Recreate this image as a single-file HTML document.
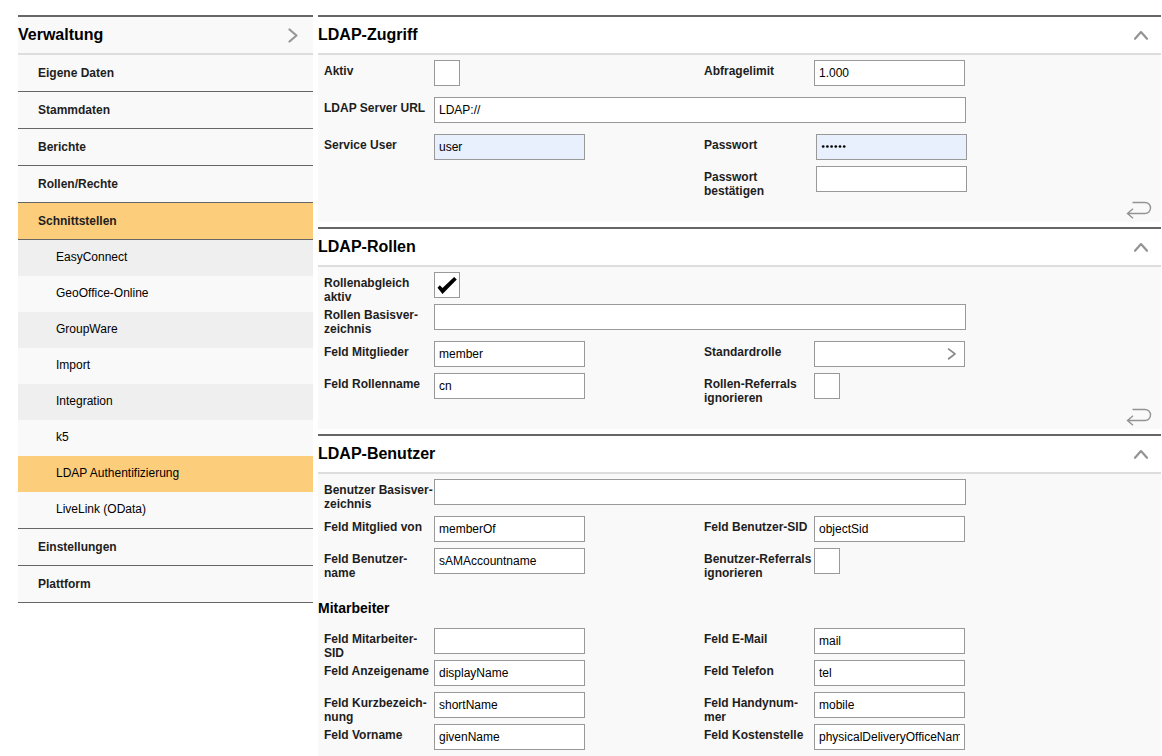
<!DOCTYPE html><html><head><meta charset="utf-8"><style>
*{box-sizing:border-box;margin:0;padding:0}
html,body{width:1162px;height:756px;overflow:hidden;background:#fff}
body{position:relative;font-family:"Liberation Sans",sans-serif;color:#000;font-size:12px}
.a{position:absolute}
.nav{position:absolute;left:18px;width:295px}
.nh{position:absolute;left:18px;top:15px;width:295px;height:40px;border-top:2px solid #666;border-bottom:2px solid #ddd;background:#f9f9f9}
.nh span{position:absolute;left:0;top:0;line-height:36px;font-size:16px;font-weight:bold}
.ni{position:absolute;left:18px;width:295px;height:37px;border-bottom:1px solid #666;background:#f9f9f9}
.ni span{position:absolute;left:20px;top:0;line-height:36px;font-weight:bold;color:#1e1e1e}
.ns{position:absolute;left:18px;width:295px;height:36px;background:#f9f9f9}
.ns span{position:absolute;left:38px;top:-1px;line-height:36px}
.alt{background:#efefef}
.act{background:#fccd7b}
.sec{position:absolute;left:318px;width:843px;border-top:2px solid #666}
.sh{height:38px;background:#fff;border-bottom:2px solid #ddd;position:relative}
.sh span{position:absolute;left:0;top:0;line-height:36px;font-size:16px;font-weight:bold}
.sb{background:#f9f9f9;position:relative}
.lb{position:absolute;font-weight:bold;line-height:14px;white-space:nowrap;color:#1e1e1e}
.in{position:absolute;width:151px;height:26px;border:1px solid #999;background:#fff;padding-left:4px;line-height:24px;white-space:nowrap;overflow:hidden}
.w{width:532px}
.cb{position:absolute;width:26px;height:26px;border:1px solid #999;background:#fff}
.af{background:#e8f0fe}
</style></head><body>
<div class="nh"><span>Verwaltung</span><svg class="a" style="left:268px;top:9px" width="14" height="20" viewBox="0 0 14 20"><path d="M3.5 3.5 L10.5 9.5 L3.5 15.5" fill="none" stroke="#999" stroke-width="2.3" stroke-linecap="round" stroke-linejoin="round"/></svg></div>
<div class="ni" style="top:55px"><span>Eigene Daten</span></div>
<div class="ni" style="top:92px"><span>Stammdaten</span></div>
<div class="ni" style="top:129px"><span>Berichte</span></div>
<div class="ni" style="top:166px"><span>Rollen/Rechte</span></div>
<div class="ni act" style="top:203px"><span>Schnittstellen</span></div>
<div class="ns alt" style="top:240px"><span>EasyConnect</span></div>
<div class="ns" style="top:276px"><span>GeoOffice-Online</span></div>
<div class="ns alt" style="top:312px"><span>GroupWare</span></div>
<div class="ns" style="top:348px"><span>Import</span></div>
<div class="ns alt" style="top:384px"><span>Integration</span></div>
<div class="ns" style="top:420px"><span>k5</span></div>
<div class="ns act" style="top:456px"><span>LDAP Authentifizierung</span></div>
<div class="ns" style="top:492px"><span>LiveLink (OData)</span></div>
<div class="a" style="left:18px;top:528px;width:295px;height:1px;background:#666"></div>
<div class="ni" style="top:529px"><span>Einstellungen</span></div>
<div class="ni" style="top:566px"><span>Plattform</span></div>
<div class="sec" style="top:15px"><div class="sh"><span>LDAP-Zugriff</span><svg class="a" style="left:813px;top:12px" width="20" height="12" viewBox="0 0 20 12"><path d="M4 9.8 L10 3.1 L16 9.8" fill="none" stroke="#939393" stroke-width="2.2" stroke-linecap="round" stroke-linejoin="round"/></svg></div><div class="sb" style="height:167px"><svg class="a" style="left:806px;top:145px" width="28" height="20" viewBox="0 0 28 20"><path d="M8.5 2.5 H21 A5.5 5.5 0 0 1 21 13.5 H3.5 M9 8.8 L3.5 13.5 L9 18.2" fill="none" stroke="#939393" stroke-width="1.4"/></svg></div></div>
<div class="sec" style="top:227px"><div class="sh"><span>LDAP-Rollen</span><svg class="a" style="left:813px;top:12px" width="20" height="12" viewBox="0 0 20 12"><path d="M4 9.8 L10 3.1 L16 9.8" fill="none" stroke="#939393" stroke-width="2.2" stroke-linecap="round" stroke-linejoin="round"/></svg></div><div class="sb" style="height:162px"><svg class="a" style="left:806px;top:140px" width="28" height="20" viewBox="0 0 28 20"><path d="M8.5 2.5 H21 A5.5 5.5 0 0 1 21 13.5 H3.5 M9 8.8 L3.5 13.5 L9 18.2" fill="none" stroke="#939393" stroke-width="1.4"/></svg></div></div>
<div class="sec" style="top:434px"><div class="sh"><span>LDAP-Benutzer</span><svg class="a" style="left:813px;top:12px" width="20" height="12" viewBox="0 0 20 12"><path d="M4 9.8 L10 3.1 L16 9.8" fill="none" stroke="#939393" stroke-width="2.2" stroke-linecap="round" stroke-linejoin="round"/></svg></div><div class="sb" style="height:322px"><svg class="a" style="left:806px;top:300px" width="28" height="20" viewBox="0 0 28 20"><path d="M8.5 2.5 H21 A5.5 5.5 0 0 1 21 13.5 H3.5 M9 8.8 L3.5 13.5 L9 18.2" fill="none" stroke="#939393" stroke-width="1.4"/></svg></div></div>
<div class="lb" style="left:324px;top:64px">Aktiv</div>
<div class="cb" style="left:434px;top:60px"></div>
<div class="lb" style="left:704px;top:64px">Abfragelimit</div>
<div class="in" style="left:814px;top:60px">1.000</div>
<div class="lb" style="left:324px;top:101px">LDAP Server URL</div>
<div class="in w" style="left:434px;top:97px">LDAP://</div>
<div class="lb" style="left:324px;top:138px">Service User</div>
<div class="in af" style="left:434px;top:134px">user</div>
<div class="lb" style="left:704px;top:138px">Passwort</div>
<div class="in af" style="left:816px;top:134px"><svg class="a" style="left:0;top:0" width="40" height="24"><circle cx="6.2" cy="11.5" r="1.35" fill="#000"/><circle cx="10.4" cy="11.5" r="1.35" fill="#000"/><circle cx="14.6" cy="11.5" r="1.35" fill="#000"/><circle cx="18.8" cy="11.5" r="1.35" fill="#000"/><circle cx="23.0" cy="11.5" r="1.35" fill="#000"/><circle cx="27.2" cy="11.5" r="1.35" fill="#000"/></svg></div>
<div class="lb" style="left:704px;top:170px">Passwort<br>bestätigen</div>
<div class="in" style="left:816px;top:166px"></div>
<div class="lb" style="left:324px;top:276px">Rollenabgleich<br>aktiv</div>
<div class="cb" style="left:434px;top:272px"><svg class="a" style="left:-1px;top:-1px" width="26" height="26" viewBox="0 0 26 26"><polygon points="3.5,15.8 5.8,13.3 8.5,16 20.1,5 22.8,7.5 8.5,21.9" fill="#000"/></svg></div>
<div class="lb" style="left:324px;top:308px">Rollen Basisver-<br>zeichnis</div>
<div class="in w" style="left:434px;top:304px"></div>
<div class="lb" style="left:324px;top:345px">Feld Mitglieder</div>
<div class="in" style="left:434px;top:341px">member</div>
<div class="lb" style="left:704px;top:345px">Standardrolle</div>
<div class="in" style="left:814px;top:341px"><svg class="a" style="left:131px;top:6px" width="12" height="14" viewBox="0 0 12 14"><path d="M2.7 1.1 L9 5.9 L2.7 10.7" fill="none" stroke="#888" stroke-width="1.8" stroke-linecap="round" stroke-linejoin="round"/></svg></div>
<div class="lb" style="left:324px;top:377px">Feld Rollenname</div>
<div class="in" style="left:434px;top:373px">cn</div>
<div class="lb" style="left:704px;top:377px">Rollen-Referrals<br>ignorieren</div>
<div class="cb" style="left:814px;top:373px"></div>
<div class="lb" style="left:324px;top:483px">Benutzer Basisver-<br>zeichnis</div>
<div class="in w" style="left:434px;top:479px"></div>
<div class="lb" style="left:324px;top:520px">Feld Mitglied von</div>
<div class="in" style="left:434px;top:516px">memberOf</div>
<div class="lb" style="left:704px;top:520px">Feld Benutzer-SID</div>
<div class="in" style="left:814px;top:516px">objectSid</div>
<div class="lb" style="left:324px;top:552px">Feld Benutzer-<br>name</div>
<div class="in" style="left:434px;top:548px">sAMAccountname</div>
<div class="lb" style="left:704px;top:552px">Benutzer-Referrals<br>ignorieren</div>
<div class="cb" style="left:814px;top:548px"></div>
<div class="a" style="left:318px;top:600px;font-size:14px;font-weight:bold;line-height:16px">Mitarbeiter</div>
<div class="lb" style="left:324px;top:632px">Feld Mitarbeiter-<br>SID</div>
<div class="in" style="left:434px;top:628px"></div>
<div class="lb" style="left:704px;top:632px">Feld E-Mail</div>
<div class="in" style="left:814px;top:628px">mail</div>
<div class="lb" style="left:324px;top:664px">Feld Anzeigename</div>
<div class="in" style="left:434px;top:660px">displayName</div>
<div class="lb" style="left:704px;top:664px">Feld Telefon</div>
<div class="in" style="left:814px;top:660px">tel</div>
<div class="lb" style="left:324px;top:696px">Feld Kurzbezeich-<br>nung</div>
<div class="in" style="left:434px;top:692px">shortName</div>
<div class="lb" style="left:704px;top:696px">Feld Handynum-<br>mer</div>
<div class="in" style="left:814px;top:692px">mobile</div>
<div class="lb" style="left:324px;top:728px">Feld Vorname</div>
<div class="in" style="left:434px;top:724px">givenName</div>
<div class="lb" style="left:704px;top:728px">Feld Kostenstelle</div>
<div class="in" style="left:814px;top:724px"><span style="display:block;overflow:hidden;width:141px">physicalDeliveryOfficeName</span></div>
</body></html>
